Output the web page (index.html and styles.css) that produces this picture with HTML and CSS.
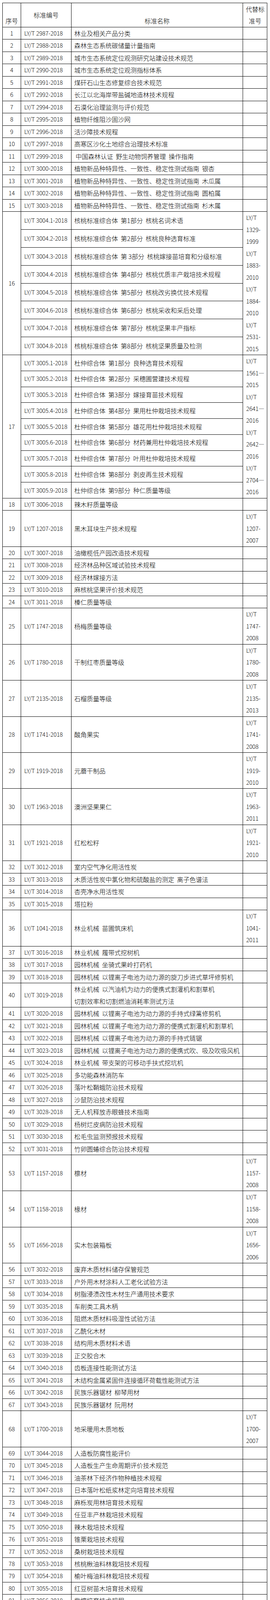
FILE: styles.css
```
html, body {
  margin: 0;
  padding: 0;
  background: #fff;
  -webkit-text-size-adjust: 100%;
  text-size-adjust: 100%;
}

body {
  padding: 7px 0 0 6px;
  font-family: "Noto Sans CJK SC", "Noto Sans", sans-serif;
  font-size: 16px;
  font-weight: 300;
  color: #000;
}

.std {
  border-collapse: collapse;
  table-layout: fixed;
  width: 677px;
}

.w1 { width: 47px; }
.w2 { width: 129px; }
.w3 { width: 439px; }
.w4 { width: 62px; }

.std th,
.std td {
  border: 1px solid #000;
  padding: 0 2px 0 7px;
  font-size: 16px;
  line-height: 30.48px;
  font-weight: 300;
  vertical-align: middle;
  white-space: nowrap;
  text-align: left;
}

/* header */
.std th { text-align: center; padding: 0; }
.std .hn { vertical-align: bottom; }
.std .hm { vertical-align: bottom; }
.std .hr { padding: 0 5px 0 6px; }

/* serial number column */
.std tr > td:first-child {
  text-align: center;
  padding: 0;
  font-size: 14.8px;
}

/* standard code column */
.std tr > td:nth-child(2) {
  padding: 0 0 0 8px;
  font-size: 14.8px;
}
.std tr.s > td:first-child {
  text-align: left;
  padding: 0 0 0 8px;
  font-size: 14.8px;
}

/* name column inside grouped rows */
.std tr.s > td:nth-child(2) {
  padding: 0 2px 0 7px;
  font-size: 16px;
}

/* replaced standard column */
.std tr > td:nth-child(4) {
  padding: 0 5px 0 8px;
  font-size: 14.8px;
}
```

FILE: index.html
```
<!DOCTYPE html>
<html lang="zh-CN">
<head>
<meta charset="utf-8">
<meta name="viewport" content="width=device-width, initial-scale=1">
<title>标准清单</title>
<link rel="stylesheet" href="styles.css">
</head>
<body>
<table class="std">
<colgroup><col class="w1"><col class="w2"><col class="w3"><col class="w4"></colgroup>
<thead>
<tr><th class="hn">序号<th class="hc">标准编号<th class="hm">标准名称<th class="hr">代替标<br>准号
</thead>
<tbody>
<tr><td>1<td>LY/T 2987-2018<td>林业及相关产品分类<td>
<tr><td>2<td>LY/T 2988-2018<td>森林生态系统碳储量计量指南<td>
<tr><td>3<td>LY/T 2989-2018<td>城市生态系统定位观测研究站建设技术规范<td>
<tr><td>4<td>LY/T 2990-2018<td>城市生态系统定位观测指标体系<td>
<tr><td>5<td>LY/T 2991-2018<td>煤矸石山生态修复综合技术规范<td>
<tr><td>6<td>LY/T 2992-2018<td>长江以北海岸带盐碱地造林技术规程<td>
<tr><td>7<td>LY/T 2994-2018<td>石漠化治理监测与评价规范<td>
<tr><td>8<td>LY/T 2995-2018<td>植物纤维阻沙固沙网<td>
<tr><td>9<td>LY/T 2996-2018<td>活沙障技术规程<td>
<tr><td>10<td>LY/T 2997-2018<td>高寒区沙化土地综合治理技术标准<td>
<tr><td>11<td>LY/T 2999-2018<td>&nbsp;中国森林认证&nbsp; 野生动物饲养管理&nbsp; 操作指南<td>
<tr><td>12<td>LY/T 3000-2018<td>植物新品种特异性、一致性、稳定性测试指南&nbsp; 银杏<td>
<tr><td>13<td>LY/T 3001-2018<td>植物新品种特异性、一致性、稳定性测试指南&nbsp; 木瓜属<td>
<tr><td>14<td>LY/T 3002-2018<td>植物新品种特异性、一致性、稳定性测试指南&nbsp; 圆柏属<td>
<tr><td>15<td>LY/T 3003-2018<td>植物新品种特异性、一致性、稳定性测试指南&nbsp; 杉木属<td>
<tr><td rowspan="8">16<td>LY/T 3004.1-2018<td>核桃标准综合体&nbsp; 第1部分&nbsp; 核桃名词术语<td rowspan="8">LY/T<br>1329-<br>1999<br>LY/T<br>1883-<br>2010<br>LY/T<br>1884-<br>2010<br>LY/T<br>2531-<br>2015
<tr class="s"><td>LY/T 3004.2-2018<td>核桃标准综合体&nbsp; 第2部分&nbsp; 核桃良种选育标准
<tr class="s"><td>LY/T 3004.3-2018<td>核桃标准综合体&nbsp; 第 3部分&nbsp; 核桃嫁接苗培育和分级标准
<tr class="s"><td>LY/T 3004.4-2018<td>核桃标准综合体&nbsp; 第4部分&nbsp; 核桃优质丰产栽培技术规程
<tr class="s"><td>LY/T 3004.5-2018<td>核桃标准综合体&nbsp; 第5部分&nbsp; 核桃改劣换优技术规程
<tr class="s"><td>LY/T 3004.6-2018<td>核桃标准综合体&nbsp; 第6部分&nbsp; 核桃采收和采后处理
<tr class="s"><td>LY/T 3004.7-2018<td>核桃标准综合体&nbsp; 第7部分&nbsp; 核桃坚果丰产指标
<tr class="s"><td>LY/T 3004.8-2018<td>核桃标准综合体&nbsp; 第8部分&nbsp; 核桃坚果质量及检测
<tr><td rowspan="9">17<td>LY/T 3005.1-2018<td>杜仲综合体&nbsp; 第1部分&nbsp; 良种选育技术规程<td rowspan="9">LY/T<br>1561—<br>2015<br>LY/T<br>2641—<br>2016<br>LY/T<br>2642—<br>2016<br>LY/T<br>2704—<br>2016
<tr class="s"><td>LY/T 3005.2-2018<td>杜仲综合体&nbsp; 第2部分&nbsp; 采穗圃营建技术规程
<tr class="s"><td>LY/T 3005.3-2018<td>杜仲综合体&nbsp; 第3部分&nbsp; 嫁接育苗技术规程
<tr class="s"><td>LY/T 3005.4-2018<td>杜仲综合体&nbsp; 第4部分&nbsp; 果用杜仲栽培技术规程
<tr class="s"><td>LY/T 3005.5-2018<td>杜仲综合体&nbsp; 第5部分&nbsp; 雄花用杜仲栽培技术规程
<tr class="s"><td>LY/T 3005.6-2018<td>杜仲综合体&nbsp; 第6部分&nbsp; 材药兼用杜仲栽培技术规程
<tr class="s"><td>LY/T 3005.7-2018<td>杜仲综合体&nbsp; 第7部分&nbsp; 叶用杜仲栽培技术规程
<tr class="s"><td>LY/T 3005.8-2018<td>杜仲综合体&nbsp; 第8部分&nbsp; 剥皮再生技术规程
<tr class="s"><td>LY/T 3005.9-2018<td>杜仲综合体&nbsp; 第9部分&nbsp; 种仁质量等级
<tr><td>18<td>LY/T 3006-2018<td>辣木籽质量等级<td>
<tr><td>19<td>LY/T 1207-2018<td>黑木耳块生产技术规程<td>LY/T<br>1207-<br>2007
<tr><td>20<td>LY/T 3007-2018<td>油橄榄低产园改造技术规程<td>
<tr><td>21<td>LY/T 3008-2018<td>经济林品种区域试验技术规程<td>
<tr><td>22<td>LY/T 3009-2018<td>经济林嫁接方法<td>
<tr><td>23<td>LY/T 3010-2018<td>麻核桃坚果评价技术规范<td>
<tr><td>24<td>LY/T 3011-2018<td>榛仁质量等级<td>
<tr><td>25<td>LY/T 1747-2018<td>杨梅质量等级<td>LY/T<br>1747-<br>2008
<tr><td>26<td>LY/T 1780-2018<td>干制红枣质量等级<td>LY/T<br>1780-<br>2008
<tr><td>27<td>LY/T 2135-2018<td>石榴质量等级<td>LY/T<br>2135-<br>2013
<tr><td>28<td>LY/T 1741-2018<td>酸角果实<td>LY/T<br>1741-<br>2008
<tr><td>29<td>LY/T 1919-2018<td>元蘑干制品<td>LY/T<br>1919-<br>2010
<tr><td>30<td>LY/T 1963-2018<td>澳洲坚果果仁<td>LY/T<br>1963-<br>2011
<tr><td>31<td>LY/T 1921-2018<td>红松松籽<td>LY/T<br>1921-<br>2010
<tr><td>32<td>LY/T 3012-2018<td>室内空气净化用活性炭<td>
<tr><td>33<td>LY/T 3013-2018<td>木质活性炭中氯化物和硫酸盐的测定&nbsp; 离子色谱法<td>
<tr><td>34<td>LY/T 3014-2018<td>杏壳净水用活性炭<td>
<tr><td>35<td>LY/T 3015-2018<td>塔拉粉<td>
<tr><td>36<td>LY/T 1041-2018<td>林业机械&nbsp; 苗圃筑床机<td>LY/T<br>1041-<br>2011
<tr><td>37<td>LY/T 3016-2018<td>林业机械&nbsp; 履带式挖树机<td>
<tr><td>38<td>LY/T 3017-2018<td>园林机械&nbsp; 坐骑式果岭打药机<td>
<tr><td>39<td>LY/T 3018-2018<td>园林机械&nbsp; 以锂离子电池为动力源的旋刀步进式草坪修剪机<td>
<tr><td>40<td>LY/T 3019-2018<td>林业机械&nbsp; 以汽油机为动力的便携式割灌机和割草机<br>切割效率和切割燃油消耗率测试方法<td>
<tr><td>41<td>LY/T 3020-2018<td>园林机械&nbsp; 以锂离子电池为动力源的手持式绿篱修剪机<td>
<tr><td>42<td>LY/T 3021-2018<td>园林机械&nbsp; 以锂离子电池为动力源的便携式割灌机和割草机<td>
<tr><td>43<td>LY/T 3022-2018<td>园林机械&nbsp; 以锂离子电池为动力源的手持式链锯<td>
<tr><td>44<td>LY/T 3023-2018<td>园林机械&nbsp; 以锂离子电池为动力源的便携式吹、吸及吹吸风机<td>
<tr><td>45<td>LY/T 3024-2018<td>林业机械&nbsp; 带支架的可移动手扶式挖坑机<td>
<tr><td>46<td>LY/T 3025-2018<td>多功能森林消防车<td>
<tr><td>47<td>LY/T 3026-2018<td>落叶松鞘蛾防治技术规程<td>
<tr><td>48<td>LY/T 3027-2018<td>沙鼠防治技术规程<td>
<tr><td>49<td>LY/T 3028-2018<td>无人机释放赤眼蜂技术指南<td>
<tr><td>50<td>LY/T 3029-2018<td>杨树烂皮病防治技术规程<td>
<tr><td>51<td>LY/T 3030-2018<td>松毛虫监测预报技术规程<td>
<tr><td>52<td>LY/T 3031-2018<td>竹卵圆蝽综合防治技术规程<td>
<tr><td>53<td>LY/T 1157-2018<td>檩材<td>LY/T<br>1157-<br>2008
<tr><td>54<td>LY/T 1158-2018<td>椽材<td>LY/T<br>1158-<br>2008
<tr><td>55<td>LY/T 1656-2018<td>实木包装箱板<td>LY/T<br>1656-<br>2006
<tr><td>56<td>LY/T 3032-2018<td>废弃木质材料储存保管规范<td>
<tr><td>57<td>LY/T 3033-2018<td>户外用木材涂料人工老化试验方法<td>
<tr><td>58<td>LY/T 3034-2018<td>树脂浸渍改性木材生产通用技术要求<td>
<tr><td>59<td>LY/T 3035-2018<td>车削类工具木柄<td>
<tr><td>60<td>LY/T 3036-2018<td>阻燃木质材料吸湿性试验方法<td>
<tr><td>61<td>LY/T 3037-2018<td>乙酰化木材<td>
<tr><td>62<td>LY/T 3038-2018<td>结构用木质材料术语<td>
<tr><td>63<td>LY/T 3039-2018<td>正交胶合木<td>
<tr><td>64<td>LY/T 3040-2018<td>齿板连接性能测试方法<td>
<tr><td>65<td>LY/T 3041-2018<td>木结构金属紧固件连接循环荷载性能测试方法<td>
<tr><td>66<td>LY/T 3042-2018<td>民族乐器锯材&nbsp; 柳琴用材<td>
<tr><td>67<td>LY/T 3043-2018<td>民族乐器锯材&nbsp; 阮用材<td>
<tr><td>68<td>LY/T 1700-2018<td>地采暖用木质地板<td>LY/T<br>1700-<br>2007
<tr><td>69<td>LY/T 3044-2018<td>人造板防腐性能评价<td>
<tr><td>70<td>LY/T 3045-2018<td>人造板生产生命周期评价技术规范<td>
<tr><td>71<td>LY/T 3046-2018<td>油茶林下经济作物种植技术规程<td>
<tr><td>72<td>LY/T 3047-2018<td>日本落叶松纸浆林定向培育技术规程<td>
<tr><td>73<td>LY/T 3048-2018<td>麻栎炭用林培育技术规程<td>
<tr><td>74<td>LY/T 3049-2018<td>任豆丰产林栽培技术规程<td>
<tr><td>75<td>LY/T 3050-2018<td>辣木栽培技术规程<td>
<tr><td>76<td>LY/T 3051-2018<td>锥栗栽培技术规程<td>
<tr><td>77<td>LY/T 3052-2018<td>桑树栽培技术规程<td>
<tr><td>78<td>LY/T 3053-2018<td>核桃楸油料林栽培技术规程<td>
<tr><td>79<td>LY/T 3054-2018<td>榆叶梅油料林栽培技术规程<td>
<tr><td>80<td>LY/T 3055-2018<td>红豆树苗木培育技术规程<td>
<tr><td>81<td>LY/T 3056-2018<td>紫檀培育技术规程<td>
<tr><td>82<td>LY/T 3057-2018<td>‘清香’核桃嫁接育苗技术规程<td>
<tr><td>83<td>LY/T 3058-2018<td>紫薇扦插育苗技术规程<td>
<tr><td>84<td>LY/T 3059-2018<td>矮牵牛种苗生产技术规程<td>
<tr><td>85<td>LY/T 3060-2018<td>一串红种苗生产技术规程<td>
<tr><td>86<td>LY/T 3061-2018<td>樟树嫩枝扦插育苗技术规程<td>
<tr><td>87<td>LY/T 3062-2018<td>芳樟扦插采穗圃营建技术规程<td>
<tr><td>88<td>LY/T 3063-2018<td>干旱荒漠区樟子松育苗技术规程<td>
<tr><td>89<td>LY/T 3064-2018<td>平枝栒子育苗技术规程<td>
<tr><td>90<td>LY/T 3065-2018<td>水栒子播种育苗技术规程<td>
<tr><td>91<td>LY/T 3066-2018<td>湿地松嫩枝扦插育苗技术规程<td>
<tr><td>92<td>LY/T 3067-2018<td>崖柏播种和扦插育苗技术规程<td>
<tr><td>93<td>LY/T 3068-2018<td>毛梾育苗技术规程<td>
<tr><td>94<td>LY/T 3069-2018<td>欧洲花楸播种育苗技术规程<td>
<tr><td>95<td>LY/T 3070-2018<td>柳树培育技术规程<td>
<tr><td>96<td>LY/T 3071-2018<td>刺槐硬枝扦插育苗技术规程<td>
<tr><td>97<td>LY/T 3072-2018<td>秋枫播种育苗技术规程<td>
<tr><td>98<td>LY/T 3073-2018<td>古树名木管护技术规程<td>
<tr><td>99<td>LY/T 3074-2018<td>沙棘种质资源异地保存库营建技术规程<td>
<tr><td>100<td>LY/T 3075-2018<td>锈色粒肩天牛检疫技术规程<td>
<tr><td>101<td>LY/T 1011-2018<td>摆动筛<td>LY/T<br>1011-<br>2001
<tr><td>102<td>LY/T 1031-2018<td>人造板生产用螺旋输送机<td>LY/T<br>1031-<br>1991
<tr><td>103<td>LY/T 1098-2018<td>网带式单板干燥机&nbsp; 网带<td>LY/T<br>1098-<br>1993
<tr><td>104<td>LY/T 1141-2018<td>成叠单板剪板机<td>LY/T<br>1141-<br>1993
<tr><td>105<td>LY/T 1168-2018<td>辊筒运输机<td>LY/T<br>1168-<br>1995
<tr><td>106<td>LY/T 1334-2018<td>磨刀机<td>LY/T<br>1334-<br>2002<br>LY/T<br>1335-<br>2002<br>LY/T<br>1336-<br>2002
<tr><td>107<td>LY/T 1361-2018<td>单板挖补机<td>LY/T<br>1361-<br>1999
<tr><td>108<td>LY/T 1423-2018<td>木材工业用旋风分离器<td>LY/T<br>1423-<br>2002<br>LY/T<br>1424-<br>2002
<tr><td>109<td>LY/T 1454-2018<td>人造板机械精度检验通则<td>LY/T<br>1454-<br>1999
<tr><td>110<td>LY/T 1458-2018<td>单板铣边机<td>LY/T<br>1458-<br>1999<br>LY/T<br>1459-<br>1999<br>LY/T<br>1460-<br>1999
<tr><td>111<td>LY/T 1455-2018<td>单板拼缝机<td>LY/T<br>1455-<br>1999<br>LY/T<br>1456-<br>1999<br>LY/T<br>1457-<br>1999
<tr><td>112<td>LY/T 3076-2018<td>木地板包装设备<td>
<tr><td>113<td>LY/T 3077-2018<td>拼装式门扇榫卯加工机<td>
<tr><td>114<td>LY/T 3078-2018<td>木门门套组合加工机<td>
<tr><td>115<td>LY/T 3079-2018<td>连续式预压机<td>
<tr><td>116<td>LY/T 3080-2018<td>竹片剖切机<td>
<tr><td>117<td>LY/T 3081-2018<td>数控门扇生产线验收通则<td>
<tr><td>118<td>LY/T 3082-2018<td>复合式旋切机<td>
<tr><td>119<td>LY/T 3083-2018<td>C型竹筷加工机<td>
<tr><td>120<td>LY/T 3084-2018<td>木质板件贴面热压机<td>
</tbody>
</table>
</body>
</html>
```
